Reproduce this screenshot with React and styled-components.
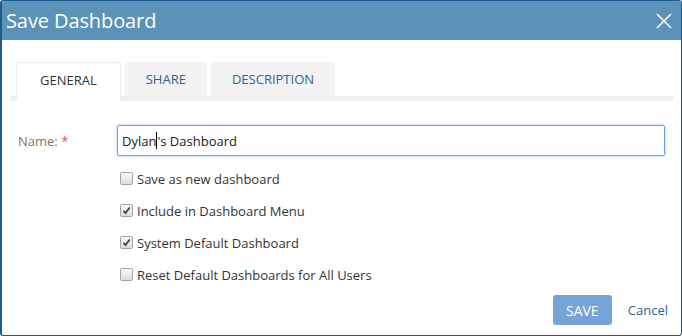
import React from 'react'
import styled, { createGlobalStyle } from 'styled-components'

const Global = createGlobalStyle`
  html, body { margin: 0; padding: 0; background: #fff; }
  body { font-family: "Open Sans", "Liberation Sans", sans-serif; }
`

const Dialog = styled.div`
  width: 682px;
  height: 336px;
  box-sizing: border-box;
  border: 1px solid #1d5a8e;
  border-left-width: 2px;
  border-radius: 3px;
  display: flex;
  flex-direction: column;
  overflow: hidden;
  background: #fff;
`

const Header = styled.div`
  height: 39px;
  background: #5a92b8;
  display: flex;
  align-items: center;
  justify-content: space-between;
  padding: 0 9px 0 4px;
  flex-shrink: 0;
`

const Title = styled.h1`
  margin: 0;
  font-size: 20px;
  font-weight: 400;
  color: #fff;
  letter-spacing: -0.1px;
`

const Close = styled.span`
  display: flex;
  color: #fff;
`

const Body = styled.div`
  flex: 1;
  padding: 22px 8px 0 8px;
  display: flex;
  flex-direction: column;
`

const TabStrip = styled.div`
  display: flex;
  gap: 4px;
  padding-left: 6px;
  border-bottom: 5px solid #f0f0f0;
`

const Tab = styled.div`
  padding: 0 ${p => p.$px}px;
  display: flex;
  align-items: center;
  font-size: 13px;
  background: ${p => (p.$active ? '#fff' : '#f2f2f2')};
  color: ${p => (p.$active ? '#333' : '#2a6496')};
  border-radius: 3px 3px 0 0;
  margin-bottom: ${p => (p.$active ? '-5px' : '0')};
  height: ${p => (p.$active ? '39px' : '34px')};
  box-sizing: border-box;
  padding-bottom: ${p => (p.$active ? '5px' : '0')};
  border: ${p => (p.$active ? '1px solid #ececec' : 'none')};
  border-bottom: none;
`

const Form = styled.div`
  padding: 24px 0 0 8px;
  display: flex;
  flex-direction: column;
`

const Row = styled.div`
  display: flex;
  align-items: center;
`

const Label = styled.label`
  width: 99px;
  font-size: 13px;
  color: #8a7060;
`

const Req = styled.span`
  color: #d9534f;
`

const Input = styled.div`
  flex: 1;
  height: 31px;
  box-sizing: border-box;
  margin-right: 8px;
  border: 1px solid #66a3e6;
  border-radius: 2px;
  box-shadow: 0 0 3px rgba(102, 163, 230, 0.6);
  display: flex;
  align-items: center;
  padding-left: 4px;
  font-size: 13px;
  color: #222;
`

const Caret = styled.span`
  display: inline-block;
  width: 1px;
  height: 17px;
  background: #000;
  vertical-align: middle;
`

const Checks = styled.div`
  display: flex;
  flex-direction: column;
  gap: 13px;
  padding: 13px 0 0 102px;
`

const Check = styled.div`
  display: flex;
  align-items: center;
  gap: 4px;
  height: 19px;
  font-size: 13px;
  color: #333;
`

const Box = styled.span`
  width: 11px;
  height: 11px;
  border: 1px solid #a6a6a6;
  border-radius: 2px;
  background: linear-gradient(#fafafa, #dcdcdc);
  display: flex;
  align-items: center;
  justify-content: center;
`

const Footer = styled.div`
  margin-top: auto;
  display: flex;
  justify-content: flex-end;
  align-items: center;
  gap: 16px;
  padding: 0 5px 10px 0;
`

const SaveButton = styled.button`
  width: 59px;
  height: 30px;
  border: none;
  border-radius: 3px;
  background: #76a3d8;
  color: #fff;
  font-family: inherit;
  font-size: 14px;
`

const Cancel = styled.a`
  font-size: 13px;
  color: #2a6496;
`

const CheckBox = ({ checked }) => (
  <Box>
    {checked && (
      <svg width="9" height="9" viewBox="0 0 9 9">
        <path d="M1.5 4.8 L3.5 7 L7.8 1.5" fill="none" stroke="#444" strokeWidth="1.8" />
      </svg>
    )}
  </Box>
)

const options = [
  { text: 'Save as new dashboard', checked: false },
  { text: 'Include in Dashboard Menu', checked: true },
  { text: 'System Default Dashboard', checked: true },
  { text: 'Reset Default Dashboards for All Users', checked: false },
]

export default function App() {
  return (
    <>
      <Global />
      <Dialog>
        <Header>
          <Title>Save Dashboard</Title>
          <Close>
            <svg width="16" height="16" viewBox="0 0 16 16">
              <path d="M1 1 L15 15 M15 1 L1 15" stroke="#fff" strokeWidth="1.6" />
            </svg>
          </Close>
        </Header>
        <Body>
          <TabStrip>
            <Tab $active $px={23}>GENERAL</Tab>
            <Tab $px={21}>SHARE</Tab>
            <Tab $px={21}>DESCRIPTION</Tab>
          </TabStrip>
          <Form>
            <Row>
              <Label>
                Name: <Req>*</Req>
              </Label>
              <Input>
                Dylan<Caret />'s Dashboard
              </Input>
            </Row>
            <Checks>
              {options.map(o => (
                <Check key={o.text}>
                  <CheckBox checked={o.checked} />
                  {o.text}
                </Check>
              ))}
            </Checks>
          </Form>
          <Footer>
            <SaveButton>SAVE</SaveButton>
            <Cancel>Cancel</Cancel>
          </Footer>
        </Body>
      </Dialog>
    </>
  )
}
